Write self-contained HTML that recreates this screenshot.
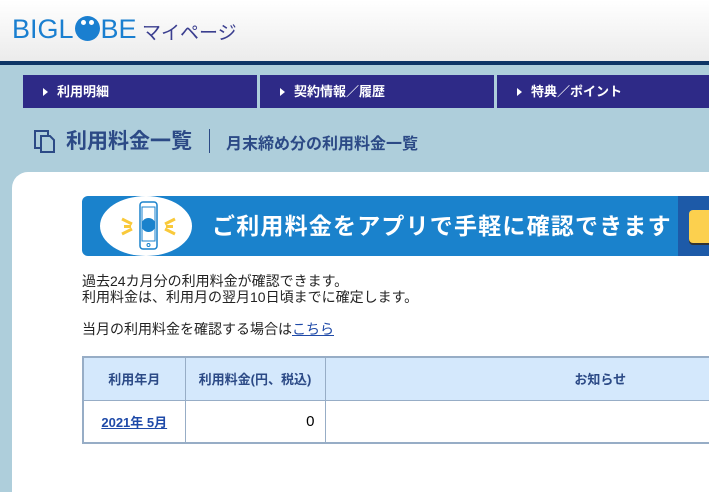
<!DOCTYPE html>
<html><head><meta charset="utf-8"><style>
*{margin:0;padding:0;box-sizing:border-box}
body{width:709px;height:474px;overflow:hidden;background:#aecedb;font-family:"Liberation Sans","Noto Sans CJK JP",sans-serif;position:relative}
.hdr{position:absolute;left:0;top:0;width:709px;height:62px;background:linear-gradient(#fff,#ebebeb)}
.line{position:absolute;left:0;top:61px;width:709px;height:4px;background:#0e3566}
.logo{position:absolute;left:12px;top:14px;font-size:27px;color:#1a7fd0;letter-spacing:0px;font-weight:400}
.mp{position:absolute;left:142px;top:18px;font-size:19px;color:#3a3e8f}
.nav{position:absolute;top:75px;height:33px;background:#2e2a87;color:#fff;font-size:13px;font-weight:bold;line-height:33px;padding-left:34px}
.nav:before{content:"";position:absolute;left:20px;top:13px;border-left:5px solid #fff;border-top:4px solid transparent;border-bottom:4px solid transparent}
.ttl{position:absolute;left:66px;top:125px;font-size:21px;font-weight:bold;color:#2c4a86}
.sub{position:absolute;left:226px;top:130px;font-size:16px;font-weight:bold;color:#2c4a86}
.sep{position:absolute;left:209px;top:129px;width:1px;height:24px;background:#2c4a86}
.card{position:absolute;left:12px;top:172px;width:720px;height:320px;background:#fff;border-radius:16px 0 0 0}
.ban{position:absolute;left:82px;top:196px;width:600px;height:60px;background:#1a82cc;border-radius:6px 0 0 6px}
.banr{position:absolute;left:678px;top:196px;width:40px;height:60px;background:#1d5aa8}
.yb{position:absolute;left:689px;top:210px;width:30px;height:33px;background:#fcd04e;border-radius:4px;box-shadow:0 2px 0 #333}
.bt{position:absolute;left:212px;top:207px;font-size:23px;font-weight:bold;color:#fff;letter-spacing:1.2px}
.txt{position:absolute;left:82px;font-size:14px;color:#222;line-height:16px}
table{position:absolute;left:82px;top:356px;width:795px;border-collapse:collapse;border:2px solid #97adc6;font-size:13px}
td,th{border:1px solid #97adc6;height:43px}
th{background:#d4e8fc;color:#2c4a86;font-weight:bold;font-size:13px}
</style></head><body>
<div class="hdr"></div><div class="line"></div>
<div class="logo">BIGL<span style="display:inline-block;width:25px;height:25px;border-radius:50%;background:#1a7fd0;vertical-align:-3px;position:relative;margin:0 1px"><i style="position:absolute;left:6px;top:4px;width:5px;height:5px;border-radius:50%;background:#fff"></i><i style="position:absolute;left:14px;top:4px;width:5px;height:5px;border-radius:50%;background:#fff"></i></span>BE</div>
<div class="mp">マイページ</div>
<div class="nav" style="left:23px;width:234px">利用明細</div>
<div class="nav" style="left:260px;width:234px">契約情報／履歴</div>
<div class="nav" style="left:497px;width:212px">特典／ポイント</div>
<svg style="position:absolute;left:33px;top:129px" width="24" height="24"><rect x="2" y="2" width="13" height="17" fill="none" stroke="#2c4a86" stroke-width="2"/><path d="M8 7h9l4 4v12H8z" fill="#aecedb" stroke="#2c4a86" stroke-width="2"/></svg>
<div class="ttl">利用料金一覧</div><div class="sep"></div>
<div class="sub">月末締め分の利用料金一覧</div>
<div class="card"></div>
<div class="ban"></div><div class="banr"></div><div class="yb"></div>
<div style="position:absolute;left:100px;top:196px;width:92px;height:60px;background:#fff;border-radius:50%/50%"></div>
<svg style="position:absolute;left:118px;top:199px" width="60" height="55"><rect x="22" y="3" width="17" height="47" rx="3" fill="#fff" stroke="#1a82cc" stroke-width="1.5"/><rect x="24" y="8" width="13" height="34" fill="none" stroke="#1a82cc" stroke-width="1"/><circle cx="30.5" cy="26" r="7" fill="#1a82cc"/><circle cx="30.5" cy="46" r="1.5" fill="none" stroke="#1a82cc"/><path d="M4 20l10 5M4 35l10-5M57 20l-10 5M57 35l-10-5M6 27.5h7M48 27.5h7" stroke="#f9c93a" stroke-width="3"/></svg>
<div class="bt">ご利用料金をアプリで手軽に確認できます</div>
<div class="txt" style="top:273px">過去24カ月分の利用料金が確認できます。<br>利用料金は、利用月の翌月10日頃までに確定します。</div>
<div class="txt" style="top:321px">当月の利用料金を確認する場合は<span style="color:#1f4aa8;text-decoration:underline">こちら</span></div>
<table><tr><th style="width:102px">利用年月</th><th style="width:140px">利用料金(円、税込)</th><th>お知らせ</th></tr>
<tr><td style="text-align:center;color:#1f4aa8;text-decoration:underline;font-weight:bold;font-size:13px">2021年 5月</td><td style="text-align:right;padding-right:10px;font-size:15px">0</td><td></td></tr></table>
</body></html>
